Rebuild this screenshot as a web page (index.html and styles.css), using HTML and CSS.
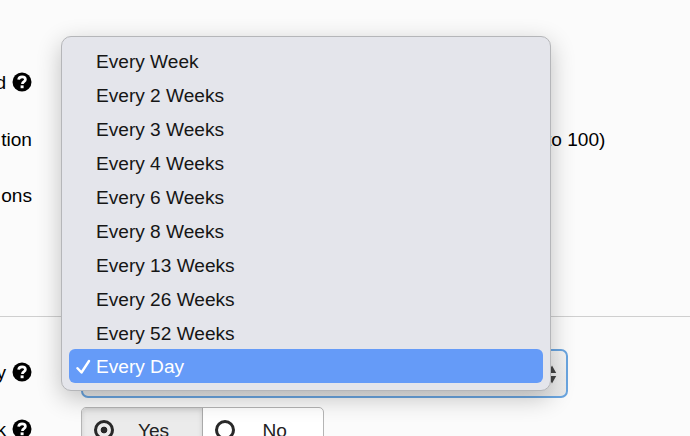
FILE: index.html
```
<!DOCTYPE html>
<html lang="en">
<head>
    <meta charset="UTF-8">
    <meta name="viewport" content="width=device-width, initial-scale=1.0">
    <title>Schedule settings</title>
    <link rel="stylesheet" href="styles.css">
</head>
<body>
    <svg class="symbols" width="0" height="0">
        <symbol id="help" viewBox="0 0 20 20">
            <circle cx="10" cy="10" r="9.5" fill="#000"/>
            <path d="M6.6 7.7C6.8 5.7 8.2 4.8 10.1 4.8c2 0 3.3 1 3.3 2.7 0 2.1-3 2.1-3 4.4" fill="none" stroke="#fff" stroke-width="2.7"/>
            <rect x="8.6" y="13.4" width="3" height="2.8" fill="#fff"/>
        </symbol>
    </svg>

    <div class="form">
        <div class="row">
            <div class="label">d <svg class="help"><use href="#help"/></svg></div>
        </div>
        <div class="row">
            <div class="label">tion</div>
            <div class="hint">to 100)</div>
        </div>
        <div class="row">
            <div class="label">ons</div>
        </div>
        <div class="divider"></div>
        <div class="row">
            <div class="label">y <svg class="help"><use href="#help"/></svg></div>
            <div class="select">
                <svg width="10" height="19" viewBox="0 0 10 19">
                    <path d="M5 0.5L9.2 8H0.8zM5 18.5L0.8 11H9.2z" fill="#444"/>
                </svg>
            </div>
        </div>
        <div class="row">
            <div class="label">k <svg class="help"><use href="#help"/></svg></div>
            <div class="toggle">
                <div class="option active"><span class="radio"></span><span class="option-text">Yes</span></div>
                <div class="option"><span class="radio"></span><span class="option-text">No</span></div>
            </div>
        </div>
    </div>

    <div class="menu">
        <div class="item">Every Week</div>
        <div class="item">Every 2 Weeks</div>
        <div class="item">Every 3 Weeks</div>
        <div class="item">Every 4 Weeks</div>
        <div class="item">Every 6 Weeks</div>
        <div class="item">Every 8 Weeks</div>
        <div class="item">Every 13 Weeks</div>
        <div class="item">Every 26 Weeks</div>
        <div class="item">Every 52 Weeks</div>
        <div class="item selected">
            <svg class="check" viewBox="0 0 15 16"><path d="M1.5 9.2L5.5 13.5L13 2" fill="none" stroke="#fff" stroke-width="2.4" stroke-linecap="round" stroke-linejoin="round"/></svg>Every Day
        </div>
    </div>
</body>
</html>
```

FILE: styles.css
```
* {
    box-sizing: border-box;
}
body {
    margin: 0;
    height: 436px;
    overflow: hidden;
    position: relative;
    background: #fbfbfb;
    color: #000;
    font-family: "Liberation Sans", Arial, sans-serif;
    font-size: 19.1px;
}
.symbols {
    display: block;
}
.form {
    height: 436px;
    padding-top: 55px;
    overflow: hidden;
}
.row {
    display: grid;
    grid-template-columns: 32px 1fr;
    column-gap: 49px;
    align-items: center;
    height: 56.5px;
}
.label {
    display: flex;
    justify-content: flex-end;
    align-items: center;
    gap: 6px;
    white-space: nowrap;
}
.help {
    width: 20px;
    height: 20px;
    flex: none;
    margin-top: -2px;
}
.hint {
    padding-left: 465px;
}
.divider {
    height: 1px;
    margin: 91.5px 0 28px;
    background: #cfcfcf;
}
.select {
    display: flex;
    justify-content: flex-end;
    align-items: center;
    width: 487px;
    height: 49px;
    margin-top: 1px;
    padding: 1px 9px 0 0;
    border: 2px solid #6aa5e0;
    border-radius: 7px;
    background: linear-gradient(#f4f4f4, #e9e9e9);
}
.toggle {
    display: flex;
    width: 243px;
    height: 45px;
    border: 1px solid #b5b5b5;
    border-radius: 5px;
    overflow: hidden;
    background: #fff;
}
.option {
    display: flex;
    align-items: center;
    width: 121px;
    padding-left: 12px;
}
.option.active {
    background: #ebebeb;
    border-right: 1px solid #aaa;
    box-shadow: inset 0 2px 5px rgba(0, 0, 0, 0.12);
}
.radio {
    width: 20px;
    height: 20px;
    border: 3px solid #292929;
    border-radius: 50%;
}
.active .radio {
    background: radial-gradient(circle, #292929 3px, transparent 3.7px);
}
.option-text {
    flex: 1;
    padding: 2px 0 0 28px;
    color: #222;
}
.active .option-text {
    padding-left: 24px;
}
.menu {
    position: absolute;
    left: 61px;
    top: 36px;
    width: 490px;
    height: 355px;
    padding: 8px 7px;
    border: 1px solid #b5b6b9;
    border-radius: 10px;
    background: #e4e5eb;
    box-shadow: 0 7px 24px rgba(0, 0, 0, 0.24);
}
.item {
    display: flex;
    align-items: center;
    height: 34px;
    padding-left: 27px;
    color: #161616;
    white-space: nowrap;
}
.item.selected {
    margin-top: -2px;
    padding: 1px 0 0 7px;
    border-radius: 6px;
    background: #659bf8;
    color: #fff;
}
.check {
    width: 15px;
    height: 16px;
    margin-right: 5px;
}
```
